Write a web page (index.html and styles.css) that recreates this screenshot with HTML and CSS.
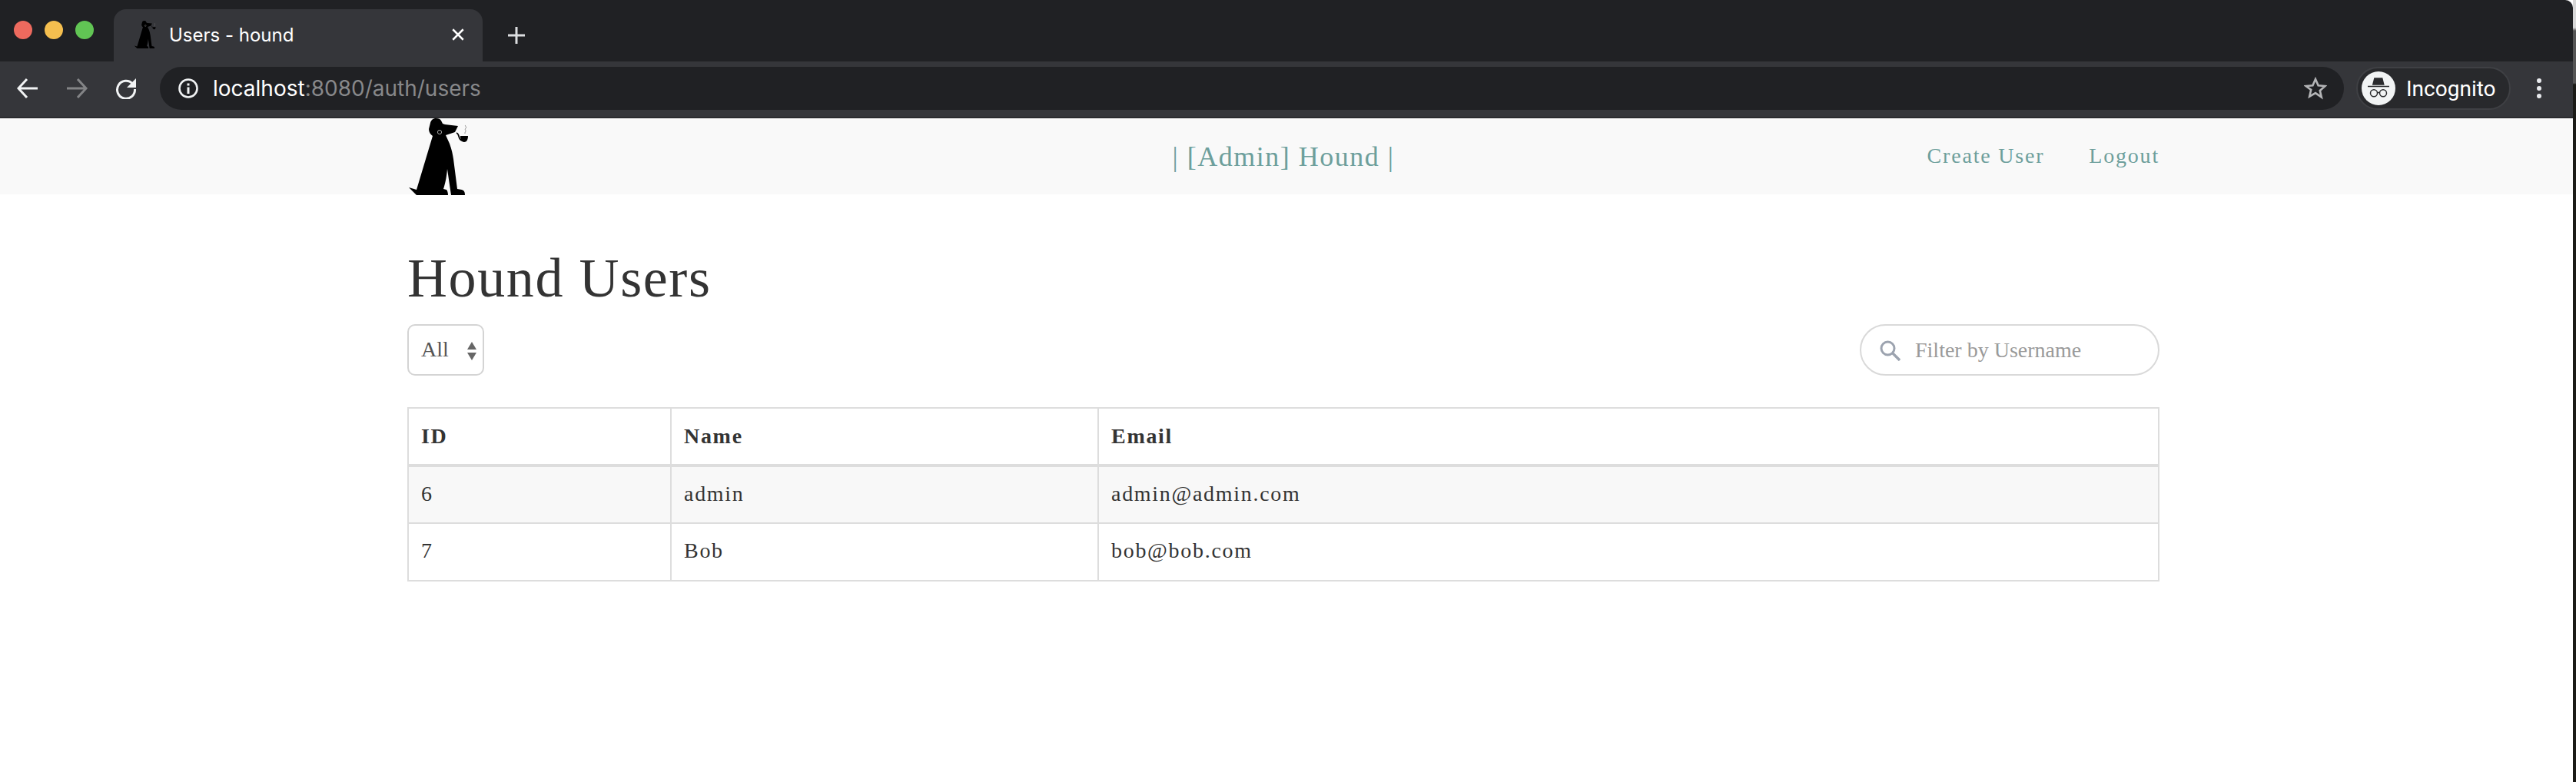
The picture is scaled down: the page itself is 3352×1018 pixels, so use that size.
FILE: index.html
```html
<!DOCTYPE html>
<html lang="en">
<head>
  <meta charset="UTF-8" />
  <title>Users - hound</title>
  <link rel="stylesheet" href="styles.css">
</head>
<body>
  <svg class="defs" width="0" height="0" aria-hidden="true">
    <symbol id="hound" viewBox="0 0 80 100">
      <path d="M28 14L30 6C31 2 34 0 37 0C41 0 43 1 44 3L46 7L49 8L66 10L62 18L50 22L55 33C58 41 59 47 60 53L65 92L71 93C74 94 75 96 75 100L57 100L52 66C51 78 49 86 47 92L51 93C52 94 53 97 53 100L12 100L2 90L12 93L33 23C30 21 28 18 28 14Z" fill="#000"/>
      <circle cx="42" cy="18" r="2.600" fill="none" stroke="#ccc" stroke-width=".8"/>
      <path d="M64 19C67 20 67 24 68 26C69 29 71 29 73 29" fill="none" stroke="#000" stroke-width="1.800"/>
      <path d="M69 23L79 23C79 28 77 31 74 31C71 31 69 28 69 23Z" fill="#000"/>
      <path d="M76 9C74 10 78 11 76 13C74 15 77 16 76 17C75 18 75 19 75 20" fill="none" stroke="#888" stroke-width="1"/>
    </symbol>
  </svg>

  <div class="window">
    <header class="chrome">
      <div class="tabstrip">
        <div class="lights">
          <span class="light light-red"></span>
          <span class="light light-yellow"></span>
          <span class="light light-green"></span>
        </div>
        <div class="tab">
          <svg class="favicon"><use href="#hound"/></svg>
          <span class="tab-title">Users - hound</span>
          <svg class="tab-close" viewBox="0 0 16 16"><path d="M2 2l12 12M14 2L2 14" stroke="#fff" stroke-width="2.200"/></svg>
        </div>
        <svg class="new-tab" viewBox="0 0 24 24"><path d="M12 1v22M1 12h22" stroke="#dcdee0" stroke-width="3"/></svg>
      </div>
      <div class="toolbar">
        <svg class="nav-icon" viewBox="0 0 28 28"><path d="M27 14H2M13 2L2 14l11 12" fill="none" stroke="#f1f3f4" stroke-width="3"/></svg>
        <svg class="nav-icon" viewBox="0 0 28 28"><path d="M1 14h25M15 2l11 12-11 12" fill="none" stroke="#838486" stroke-width="3"/></svg>
        <svg class="nav-icon" viewBox="0 0 28 28"><path d="M22.500 8A11.500 11.500 0 1 0 25.500 15" fill="none" stroke="#f1f3f4" stroke-width="3"/><path d="M27 1v12H15z" fill="#f1f3f4"/></svg>
        <div class="omnibox">
          <svg class="info-icon" viewBox="0 0 28 28"><circle cx="14" cy="14" r="11.500" fill="none" stroke="#f1f3f4" stroke-width="2.600"/><path d="M12.500 12.500h3V21h-3zM12.500 7.500h3v3h-3z" fill="#f1f3f4"/></svg>
          <span class="url">localhost<span class="url-dim">:8080/auth/users</span></span>
          <svg class="star-icon" viewBox="0 0 30 30"><path d="M15 3l3.600 8.200 8.900.8-6.700 5.900 2 8.700L15 21.100 7.200 25.600l2-8.700L2.500 12l8.900-.8z" fill="none" stroke="#b4b5b7" stroke-width="2.600"/></svg>
        </div>
        <div class="profile">
          <span class="avatar">
            <svg viewBox="0 0 44 44"><path d="M16.300 8.300h11l2.400 9.400h-15.800z" fill="#292a2d"/><path d="M8 19.500h28" stroke="#292a2d" stroke-width="1.500"/><circle cx="16" cy="28.300" r="4.500" fill="none" stroke="#292a2d" stroke-width="1.500"/><circle cx="28" cy="28.300" r="4.500" fill="none" stroke="#292a2d" stroke-width="1.500"/><path d="M20 27.500h4" stroke="#292a2d" stroke-width="1.500"/></svg>
          </span>
          <span class="profile-name">Incognito</span>
        </div>
        <div class="menu-dots"><span></span><span></span><span></span></div>
      </div>
    </header>

    <nav class="navbar">
      <div class="container navbar-inner">
        <a class="logo" href="#"><svg><use href="#hound"/></svg></a>
        <div class="navbar-title">| [Admin] Hound |</div>
        <div class="navbar-links">
          <a href="#">Create User</a>
          <a href="#">Logout</a>
        </div>
      </div>
    </nav>

    <main class="container">
      <h1>Hound Users</h1>
      <div class="controls">
        <div class="select-box">
          <span>All</span>
          <span class="select-arrows"></span>
        </div>
        <div class="search-box">
          <svg viewBox="0 0 28 28"><circle cx="11.500" cy="11.500" r="8.500" fill="none" stroke="#9ca3af" stroke-width="3"/><path d="M18 18l9 9" stroke="#9ca3af" stroke-width="3.400"/></svg>
          <span>Filter by Username</span>
        </div>
      </div>
      <table class="users-table">
        <thead>
          <tr><th class="col-id">ID</th><th class="col-name">Name</th><th>Email</th></tr>
        </thead>
        <tbody>
          <tr><td>6</td><td>admin</td><td>admin@admin.com</td></tr>
          <tr><td>7</td><td>Bob</td><td>bob@bob.com</td></tr>
        </tbody>
      </table>
    </main>
  </div>
  <div class="edge"></div>
</body>
</html>
```

FILE: styles.css
```css
* {
  box-sizing: border-box;
}

html, body {
  height: 100%;
}

body {
  margin: 0;
  display: flex;
  overflow: hidden;
  background: #fff;
  color: #333;
  font-family: "Liberation Serif", serif;
}

.defs {
  position: absolute;
}

.window {
  flex: 1;
  min-width: 0;
}

.edge {
  width: 4px;
  background: linear-gradient(#d8d8d8 0, #d8d8d8 36px, #555 40px, #555 108px, #1b1b17 110px);
}

/* browser chrome */
.chrome {
  font-family: Inter, Roboto, sans-serif;
  color: #fff;
}

.tabstrip {
  height: 80px;
  background: #202124;
  border-top-right-radius: 10px;
  display: flex;
  align-items: flex-end;
}

.lights {
  width: 148px;
  height: 80px;
  display: flex;
  gap: 16px;
  padding: 27px 0 0 18px;
}

.light {
  width: 24px;
  height: 24px;
  border-radius: 50%;
}

.light-red { background: #ed6a5e; }
.light-yellow { background: #f5bf4f; }
.light-green { background: #61c554; }

.tab {
  width: 480px;
  height: 68px;
  background: #35363a;
  border-radius: 16px 16px 0 0;
  display: flex;
  align-items: center;
  padding: 0 23px 0 24px;
}

.favicon {
  width: 33px;
  height: 36px;
  margin-right: 15px;
  margin-bottom: 3px;
}

.tab-title {
  flex: 1;
  font-size: 24px;
  margin-bottom: 2px;
}

.tab-close {
  width: 18px;
  height: 18px;
  margin-bottom: 2px;
}

.new-tab {
  width: 24px;
  height: 24px;
  margin: 0 0 22px 32px;
}

.toolbar {
  height: 74px;
  background: #35363a;
  border-bottom: 2px solid #2a2b2e;
  display: flex;
  align-items: center;
  padding: 0 0 2px 22px;
}

.nav-icon {
  width: 28px;
  height: 28px;
  margin-right: 36px;
}

.omnibox {
  width: 2842px;
  height: 56px;
  margin-left: -6px;
  background: #202124;
  border-radius: 28px;
  display: flex;
  align-items: center;
  padding: 0 22px 0 23px;
}

.info-icon {
  width: 28px;
  height: 28px;
  margin-right: 18px;
}

.url {
  flex: 1;
  font-size: 28px;
  color: #fff;
}

.url-dim {
  color: #87888a;
}

.star-icon {
  width: 30px;
  height: 30px;
}

.profile {
  width: 201px;
  height: 56px;
  margin-left: 16px;
  background: #28292c;
  border: 2px solid #3f4044;
  border-radius: 28px;
  display: flex;
  align-items: center;
  padding-left: 5px;
  font-family: Roboto, sans-serif;
  font-size: 28px;
}

.avatar {
  width: 44px;
  height: 44px;
  border-radius: 50%;
  background: #f1f3f4;
  margin-right: 14px;
}

.avatar svg {
  display: block;
}

.menu-dots {
  display: flex;
  flex-direction: column;
  gap: 4px;
  margin-left: 34px;
}

.menu-dots span {
  width: 6px;
  height: 6px;
  border-radius: 50%;
  background: #e8eaed;
}

/* page */
.container {
  width: 2280px;
  margin-left: 530px;
}

.navbar {
  height: 99px;
  background: #f9f9f9;
}

.navbar-inner {
  height: 99px;
  display: grid;
  grid-template-columns: 1fr auto 1fr;
  align-items: center;
}

.logo svg {
  display: block;
  width: 80px;
  height: 100px;
}

.navbar-title {
  font-size: 36px;
  letter-spacing: 1.500px;
  color: #6d9f9c;
}

.navbar-links {
  display: flex;
  justify-content: flex-end;
  gap: 58px;
  padding-bottom: 2px;
}

.navbar-links a {
  font-size: 28px;
  letter-spacing: 1.800px;
  color: #6d9f9c;
  text-decoration: none;
}

h1 {
  margin: 69px 0 0;
  height: 100px;
  font-size: 72px;
  font-weight: 400;
  line-height: 80px;
  letter-spacing: 1.600px;
}

.controls {
  display: flex;
  justify-content: space-between;
  align-items: center;
}

.select-box {
  width: 100px;
  height: 67px;
  border: 2px solid #d4d4d4;
  border-radius: 10px;
  display: flex;
  align-items: center;
  justify-content: space-between;
  padding: 0 8px 2px 16px;
  font-size: 28px;
  color: #555;
}

.select-arrows {
  display: flex;
  flex-direction: column;
  gap: 4px;
  margin-top: 4px;
}

.select-arrows::before,
.select-arrows::after {
  content: "";
  border-left: 6px solid transparent;
  border-right: 6px solid transparent;
}

.select-arrows::before {
  border-bottom: 10px solid #666;
}

.select-arrows::after {
  border-top: 10px solid #666;
}

.search-box {
  width: 390px;
  height: 67px;
  border: 2px solid #d9d9d9;
  border-radius: 34px;
  display: flex;
  align-items: center;
  padding-left: 23px;
  font-size: 28px;
  color: #9a9a9a;
}

.search-box svg {
  width: 28px;
  height: 28px;
  margin-right: 19px;
}

.users-table {
  width: 100%;
  margin-top: 41px;
  border-collapse: collapse;
  table-layout: fixed;
  font-size: 28px;
  letter-spacing: 1.700px;
}

.users-table th,
.users-table td {
  height: 75px;
  padding: 0 16px;
  border: 2px solid #ddd;
  text-align: left;
}

.users-table td {
  padding-bottom: 3px;
}

.users-table thead th {
  height: 75px;
  border-bottom-width: 4px;
}

.users-table tbody tr:first-child {
  background: #f8f8f8;
}

.col-id {
  width: 342px;
}

.col-name {
  width: 556px;
}
```
